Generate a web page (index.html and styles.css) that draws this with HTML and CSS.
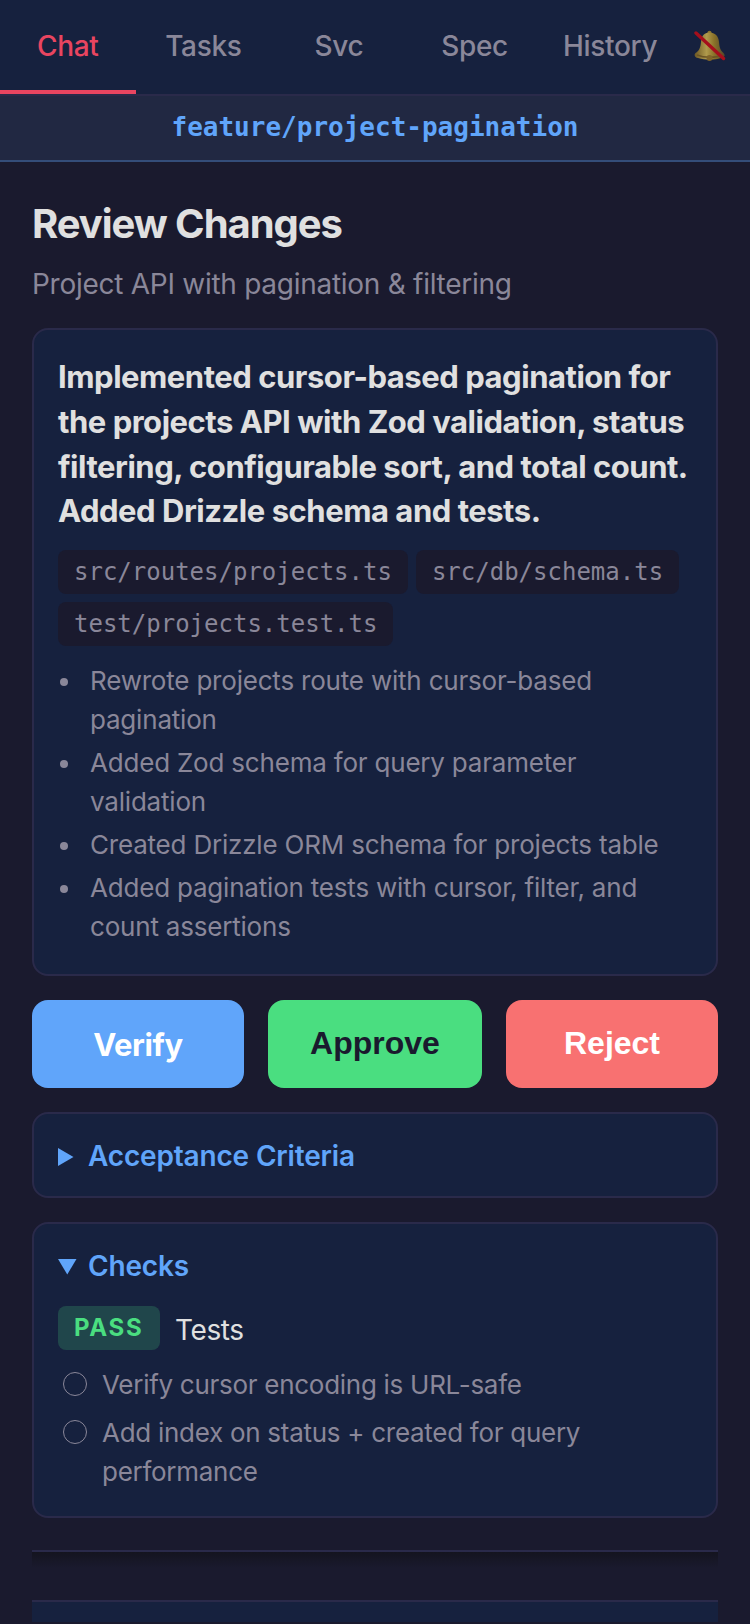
FILE: index.html
```html
<!DOCTYPE html>
<html lang="en">
	<head>
		<meta charset="UTF-8">
		<title>Review Changes</title>
		<link rel="stylesheet" href="styles.css">
	</head>
	<body>
		<nav class="tabs">
			<a class="tab active">Chat</a>
			<a class="tab">Tasks</a>
			<a class="tab">Svc</a>
			<a class="tab">Spec</a>
			<a class="tab">History</a>
			<button class="bell">
				<svg width="32" height="32" viewBox="0 0 32 32">
					<defs>
						<linearGradient id="gold" x1="0" x2="1" y1="0" y2="0">
							<stop offset="0" stop-color="#6d5824"/>
							<stop offset=".4" stop-color="#b09a4c"/>
							<stop offset=".65" stop-color="#8a7229"/>
							<stop offset="1" stop-color="#54462a"/>
						</linearGradient>
					</defs>
					<ellipse cx="15.500" cy="2.500" rx="2" ry="1.800" fill="#8a742f"/>
					<path d="M15.500 2.500C10 2.500 7.500 6 7 12C6.500 18 5 21 1.500 23C-.5 25 1 27.500 4 28C11 30 21 30 27 28C31 27.500 31.500 25 29.500 23C26 20 25.500 17 25 12C24.500 6 21 2.500 15.500 2.500Z" fill="url(#gold)"/>
					<path d="M3 25C10 28 22 28 28 25" fill="none" stroke="#6b5425" stroke-width="1.500"/>
					<circle cx="15.500" cy="28" r="3" fill="#80652a"/>
					<path d="M2 3L29.500 28.500" stroke="#a50f1c" stroke-width="3.400" stroke-linecap="round"/>
				</svg>
			</button>
		</nav>
		<div class="branch">feature/project-pagination</div>
		<main class="page">
			<h1>Review Changes</h1>
			<p class="subtitle">Project API with pagination &amp; filtering</p>

			<section class="card summary">
				<p class="lead">Implemented cursor-based pagination for<br>the projects API with Zod validation, status<br>filtering, configurable sort, and total count.<br>Added Drizzle schema and tests.</p>
				<div class="files">
					<code>src/routes/projects.ts</code>
					<code>src/db/schema.ts</code>
					<code>test/projects.test.ts</code>
				</div>
				<ul class="changes">
					<li>Rewrote projects route with cursor-based<br>pagination</li>
					<li>Added Zod schema for query parameter<br>validation</li>
					<li>Created Drizzle ORM schema for projects table</li>
					<li>Added pagination tests with cursor, filter, and<br>count assertions</li>
				</ul>
			</section>

			<div class="actions">
				<a class="btn verify">Verify</a>
				<button class="btn approve">Approve</button>
				<button class="btn reject">Reject</button>
			</div>

			<section class="card criteria">
				<div class="summary-row">
					<svg width="19" height="20" viewBox="0 0 19 20"><path d="M0 1L15.500 10L0 19Z" fill="#60a5fa"/></svg>
					<span>Acceptance Criteria</span>
				</div>
			</section>

			<section class="card checks">
				<div class="summary-row">
					<svg width="19" height="20" viewBox="0 0 19 20"><path d="M0 2H18.500L9.250 17.500Z" fill="#60a5fa"/></svg>
					<span>Checks</span>
				</div>
				<div class="check">
					<span class="badge">PASS</span>
					<span class="check-name">Tests</span>
				</div>
				<ul class="todo">
					<li>Verify cursor encoding is URL-safe</li>
					<li>Add index on status + created for query<br>performance</li>
				</ul>
			</section>

			<div class="diff"></div>
			<div class="composer"></div>
		</main>
	</body>
</html>
```

FILE: styles.css
```css
*{
	margin: 0;
	padding: 0;
	box-sizing: border-box;
}
body{
	background: #1a1a2e;
	color: #e0e0e0;
	font-family: Inter, "Liberation Sans", sans-serif;
	height: 1624px;
	overflow: hidden;
}
ul{
	list-style: none;
}
button{
	border: none;
	background: none;
}
.tabs{
	display: flex;
	height: 96px;
	background: #16213e;
	border-bottom: 2px solid #2a2a4a;
}
.tab{
	flex: 1;
	height: 94px;
	line-height: 93px;
	text-align: center;
	font-size: 28px;
	font-weight: 500;
	letter-spacing: -0.3px;
	color: #8a8799;
	border-bottom: 4px solid transparent;
}
.tab.active{
	color: #e94560;
	border-bottom-color: #e94560;
}
.bell{
	width: 72px;
	padding: 0 7px 2px 0;
	display: flex;
	align-items: center;
	justify-content: center;
}
.branch{
	height: 66px;
	line-height: 62px;
	text-align: center;
	background: rgba(96,165,250,.1);
	border-bottom: 2px solid rgba(96,165,250,.3);
	color: #60a5fa;
	font-family: "DejaVu Sans Mono", monospace;
	font-size: 26px;
	font-weight: 700;
}
.page{
	padding: 38px 32px 0;
}
h1{
	font-size: 40px;
	line-height: 48px;
	font-weight: 700;
	letter-spacing: -1.05px;
}
.subtitle{
	margin-top: 16px;
	font-size: 28px;
	line-height: 41px;
	letter-spacing: -0.27px;
	color: #8a8799;
}
.card{
	background: #16213e;
	border: 2px solid #2a2a4a;
	border-radius: 16px;
	padding: 24px;
}
.summary{
	margin-top: 23px;
	height: 648px;
}
.lead{
	padding-top: 1px;
	font-size: 31px;
	line-height: 44.8px;
	font-weight: 700;
	letter-spacing: -0.47px;
	white-space: nowrap;
}
.files{
	display: flex;
	flex-wrap: wrap;
	gap: 8px;
	margin-top: 16px;
}
.files code{
	height: 44px;
	line-height: 44px;
	padding: 0 16px;
	border-radius: 8px;
	background: #1a1a2e;
	color: #8a8799;
	font-family: "DejaVu Sans Mono", monospace;
	font-size: 24px;
}
.changes{
	margin-top: 15px;
	color: #8a8799;
	font-size: 26px;
	line-height: 39px;
	letter-spacing: -0.2px;
	white-space: nowrap;
}
.changes li{
	display: grid;
	grid-template-columns: 32px 1fr;
	margin-bottom: 4px;
}
.changes li::before{
	content: "";
	width: 8px;
	height: 8px;
	margin: 17px 0 0 2px;
	border-radius: 50%;
	background: #8a8799;
}
.actions{
	display: grid;
	grid-template-columns: 212px 214px 212px;
	gap: 24px;
	margin-top: 24px;
}
.btn{
	height: 88px;
	border-radius: 16px;
	text-align: center;
	font-size: 32px;
	font-weight: 700;
	color: #ffffff;
}
.verify{
	background: #60a5fa;
	line-height: 89px;
	font-size: 31px;
	letter-spacing: -0.4px;
}
.approve,
.reject{
	font-family: "Liberation Sans", Arial, sans-serif;
	padding-bottom: 2px;
}
.approve{
	background: #4ade80;
	color: #1a1a2e;
}
.reject{
	background: #f87171;
}
.criteria{
	margin-top: 24px;
	height: 86px;
}
.checks{
	margin-top: 24px;
	height: 296px;
}
.summary-row{
	display: flex;
	align-items: center;
	gap: 11px;
	height: 36px;
	color: #60a5fa;
	font-size: 28px;
	font-weight: 600;
	letter-spacing: -0.17px;
}
.summary-row svg{
	margin-top: 1px;
}
.check{
	display: flex;
	gap: 15px;
	margin-top: 22px;
}
.badge{
	width: 102px;
	height: 44px;
	line-height: 43px;
	padding-left: 16px;
	border-radius: 8px;
	background: rgba(74,222,128,.2);
	color: #4ade80;
	font-size: 24px;
	font-weight: 700;
	letter-spacing: 1.7px;
}
.check-name{
	line-height: 48px;
	height: 44px;
	font-size: 28px;
	letter-spacing: -0.4px;
}
.todo{
	margin-top: 15px;
	color: #8a8799;
	font-size: 26px;
	line-height: 39px;
	letter-spacing: -0.28px;
}
.todo li{
	display: grid;
	grid-template-columns: 44px 1fr;
	margin-bottom: 9px;
}
.todo li::before{
	content: "";
	width: 22px;
	height: 22px;
	margin: 7px 0 0 5px;
	border: 1px solid #8a8799;
	border-radius: 50%;
}
.diff{
	margin-top: 32px;
	height: 50px;
	border-top: 2px solid #2a2a4a;
	background: linear-gradient(#14141f, #1a1a2e 16px);
}
.composer{
	height: 22px;
	background: #16213e;
	border-top: 2px solid #2a2a4a;
}
```
